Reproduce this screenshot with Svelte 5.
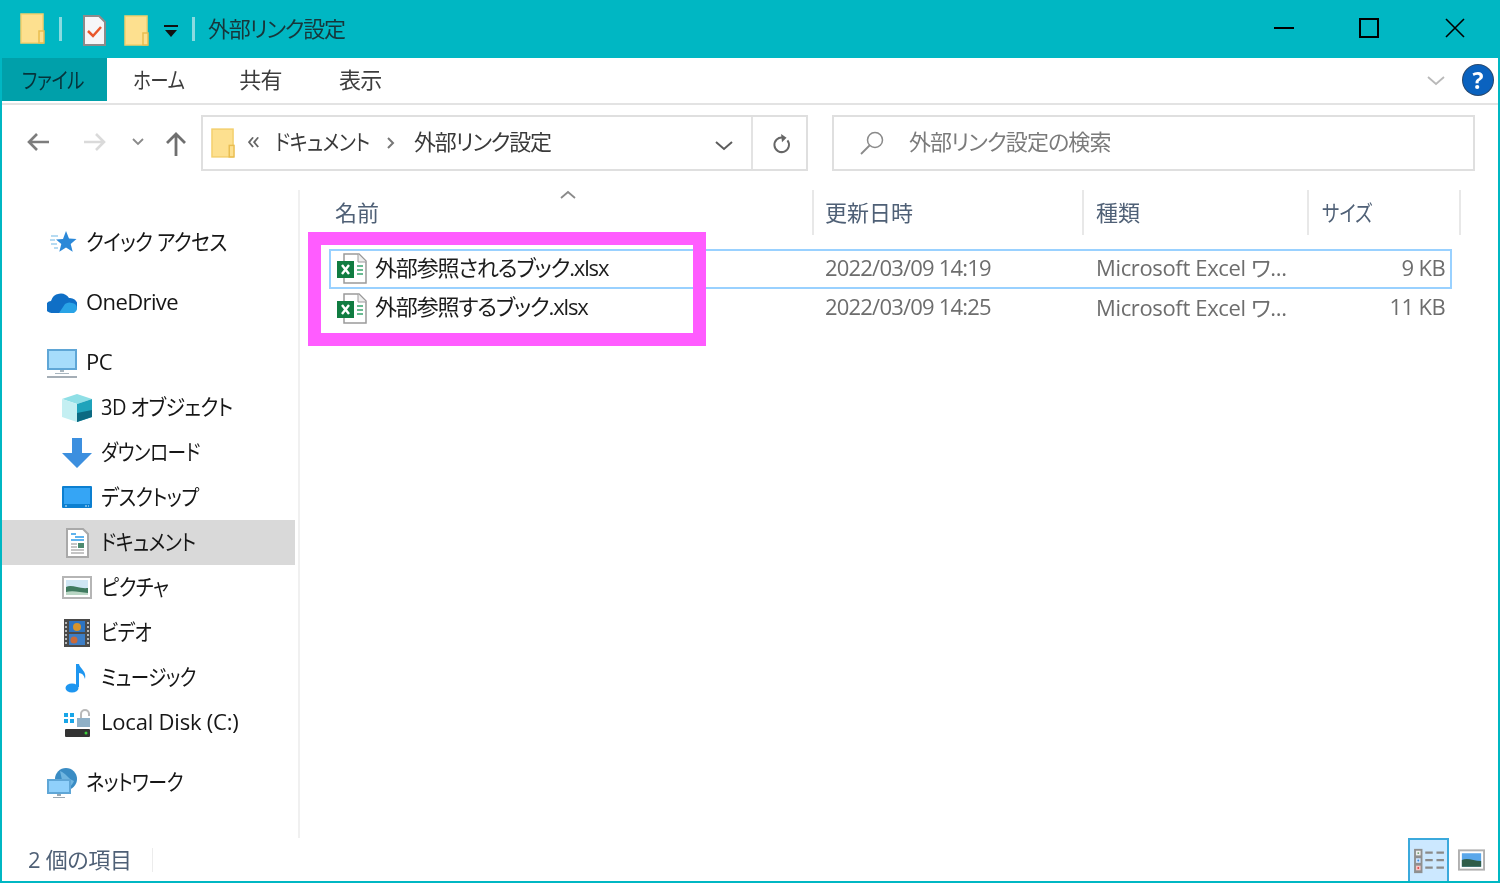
<script>
  const nav = [
    { groups: [{ icon: 'star', label: 'クイック アクセス', level: 0, sx: 0.9 }] },
    { groups: [{ icon: 'cloud', label: 'OneDrive', level: 0, latin: true, ls: -0.6 }] },
    { groups: [
      { icon: 'pc', label: 'PC', level: 0, latin: true, ls: -0.6 },
      { icon: 'cube', label: '3D オブジェクト', level: 1, sx: 0.91 },
      { icon: 'down', label: 'ダウンロード', level: 1, sx: 0.85 },
      { icon: 'desk', label: 'デスクトップ', level: 1, sx: 0.88 },
      { icon: 'doc', label: 'ドキュメント', level: 1, selected: true, sx: 0.87 },
      { icon: 'pic', label: 'ピクチャ', level: 1, sx: 0.89 },
      { icon: 'film', label: 'ビデオ', level: 1, sx: 0.85 },
      { icon: 'music', label: 'ミュージック', level: 1, sx: 0.84 },
      { icon: 'disk', label: 'Local Disk (C:)', level: 1, latin: true, ls: -0.2 }
    ] },
    { groups: [{ icon: 'net', label: 'ネットワーク', level: 0, sx: 0.86 }] }
  ];
  const files = [
    { name: '外部参照されるブック.xlsx', date: '2022/03/09 14:19', type: 'Microsoft Excel ワ...', size: '9 KB', focus: true },
    { name: '外部参照するブック.xlsx', date: '2022/03/09 14:25', type: 'Microsoft Excel ワ...', size: '11 KB', focus: false }
  ];
</script>

{#snippet folder(cls)}
  <svg class={cls} viewBox="0 0 25 31" aria-hidden="true">
    <rect x="1" y="1" width="22" height="29" fill="#fde08f" stroke="#f3cf6c" stroke-width="1.5"/>
    <rect x="19" y="18" width="5" height="12" fill="#fde08f" stroke="#e9bd50" stroke-width="1.5"/>
  </svg>
{/snippet}

{#snippet navIcon(name)}
  <svg class="nico" viewBox="0 0 30 30" aria-hidden="true">
    {#if name === 'star'}
      <path d="M19 3l3 7.500 7.500.5-5.800 5 2 7.800L19 19.500l-6.700 4.300 2-7.800-5.300-4.500 7-.5z" fill="#2b88d8"/>
      <path d="M4 8h7M3 12h5M4 16h6M7 20h4" stroke="#9fd0ee" stroke-width="1.500"/>
    {:else if name === 'cloud'}
      <path d="M6 26a6 6 0 0 1-1-12 10 10 0 0 1 18-3 7 7 0 0 1 2 15z" fill="#0f6fc6" transform="translate(-1 -1)"/>
      <path d="M12 25l6-9a7 7 0 0 1 7-1 5.500 5.500 0 0 1 5 5 5 5 0 0 1-3 5z" fill="#29a3e6"/>
    {:else if name === 'pc'}
      <rect x="0" y="1" width="30" height="21" fill="#5fa6d6"/>
      <rect x="2" y="3" width="26" height="17" fill="#a6dcfb"/>
      <path d="M13 22h4v2h-4zM8 25h14v1H8z" fill="#a9b6bf"/>
      <rect x="0" y="28" width="30" height="2" fill="#a5aeb6"/>
    {:else if name === 'cube'}
      <path d="M15 1l15 5-15 5L0 6z" fill="#8fdfe6"/>
      <path d="M0 6l15 5v18L0 24z" fill="#c4eff2"/>
      <path d="M30 6l-15 5v18l15-5z" fill="#1fa3bb"/>
      <path d="M15 20l15-3v7l-15 5z" fill="#0c6a82"/>
    {:else if name === 'down'}
      <path d="M10 0h10v15h10L15 30 0 15h10z" fill="#3c8fdf"/>
    {:else if name === 'desk'}
      <rect y="3" width="30" height="22" rx="1" fill="#0c7fd0"/>
      <rect x="2" y="5" width="26" height="16" fill="#35a5f5"/>
      <path d="M3 23h2M23 23h2M26 23h1" stroke="#d7eefc" stroke-width="1"/>
    {:else if name === 'doc'}
      <path d="M5 1h16l5 5v23H5z" fill="#fff" stroke="#a9a9a9" stroke-width="2"/>
      <path d="M9 6h5M13 9h9M9 12h13" stroke="#2b9be8" stroke-width="1.500"/>
      <path d="M9 16h6M9 19h6M9 22h13M9 25h13" stroke="#8b8b8b" stroke-width="1.200"/>
      <rect x="16" y="15" width="6" height="5" fill="#4d8a6f"/>
    {:else if name === 'pic'}
      <rect x="1" y="4" width="28" height="21" fill="#fff" stroke="#b5b5b5" stroke-width="2"/>
      <rect x="4" y="7" width="22" height="15" fill="#cfe6f4"/>
      <path d="M4 14c6-3 12 2 22 1v7H4z" fill="#3f7a5f"/>
      <path d="M4 19c6-2 14 0 22 1v2H4z" fill="#b9d6c4"/>
    {:else if name === 'film'}
      <rect x="2" y="1" width="26" height="28" fill="#4a4a4a"/>
      <rect x="7" y="3" width="16" height="11" fill="#2d74c2"/>
      <rect x="7" y="16" width="16" height="11" fill="#3d7ec6"/>
      <circle cx="15" cy="9" r="4" fill="#d7942a"/>
      <circle cx="12" cy="22" r="3.500" fill="#c96a3a"/>
      <path d="M4 4v23M26 4v23" stroke="#ddd" stroke-width="1.500" stroke-dasharray="2 2"/>
    {:else if name === 'music'}
      <ellipse cx="10" cy="25" rx="6.500" ry="4.500" fill="#1e96f0"/>
      <path d="M14 24V1h3c1 5 8 7 6 15-1-4-3-6-6-6v14z" fill="#1e96f0"/>
    {:else if name === 'disk'}
      <rect x="2" y="5" width="4" height="4" fill="#19a6e8"/><rect x="8" y="5" width="4" height="4" fill="#19a6e8"/>
      <rect x="2" y="11" width="4" height="4" fill="#19a6e8"/><rect x="8" y="11" width="4" height="4" fill="#19a6e8"/>
      <path d="M19 10V6a4 4 0 0 1 8 0v2" fill="none" stroke="#b9b9b9" stroke-width="2"/>
      <rect x="15" y="10" width="13" height="9" fill="#8fb0c7"/>
      <rect x="3" y="21" width="25" height="8" rx="1" fill="#333"/>
      <circle cx="24" cy="25" r="1.500" fill="#3bd23b"/>
    {:else if name === 'net'}
      <circle cx="19" cy="11" r="11" fill="#3a8cc4"/>
      <path d="M13 3c6 2 8 8 14 10-2 5-6 8-10 8z" fill="#6fb5e0"/>
      <rect x="0" y="11" width="24" height="15" fill="#5fa6d6"/>
      <rect x="2" y="13" width="20" height="11" fill="#8fd0fb"/>
      <path d="M10 26h4v2h-4zM6 29h12v1H6z" fill="#9aa8b2"/>
    {/if}
  </svg>
{/snippet}

{#snippet excel()}
  <svg class="xl" viewBox="0 0 30 31" aria-hidden="true">
    <path d="M7 1h15l7 7v22H7z" fill="#fff" stroke="#9b9b9b" stroke-width="1.500"/>
    <path d="M21 1v8h8" fill="#eee" stroke="#9b9b9b" stroke-width="1"/>
    <path d="M20 13h6M20 17h6M20 21h6" stroke="#3aa56f" stroke-width="1.500"/>
    <rect x="0" y="8" width="17" height="17" fill="#107c41"/>
    <path d="M5 12l7 9M12 12l-7 9" stroke="#fff" stroke-width="2.400"/>
  </svg>
{/snippet}

<div class="window">
  <header class="title">
    {@render folder('qa first')}
    <span class="tsep"></span>
    <svg class="qa check" viewBox="0 0 23 31" aria-hidden="true">
      <path d="M1 1h15l6 6v23H1z" fill="#f6f6f8" stroke="#8e8a8a" stroke-width="2"/>
      <path d="M5 16l5 5 8-9" fill="none" stroke="#e9572b" stroke-width="2.500"/>
    </svg>
    {@render folder('qa second')}
    <svg class="drop" viewBox="0 0 14 13" aria-hidden="true">
      <rect y="0" width="14" height="2" fill="#111"/>
      <path d="M1 5h12l-6 7z" fill="#111"/>
    </svg>
    <span class="tsep last"></span>
    <span class="wintitle">外部リンク設定</span>
    <div class="controls">
      <svg class="ctl min" viewBox="0 0 20 20" aria-hidden="true"><path d="M0 10h20" stroke="#000" stroke-width="2"/></svg>
      <svg class="ctl max" viewBox="0 0 20 20" aria-hidden="true"><rect x="1" y="1" width="18" height="18" fill="none" stroke="#000" stroke-width="2"/></svg>
      <svg class="ctl close" viewBox="0 0 20 20" aria-hidden="true"><path d="M1 1l18 18M19 1L1 19" stroke="#000" stroke-width="1.600"/></svg>
    </div>
  </header>

  <div class="ribbon">
    <div class="tab file"><span class="narrow">ファイル</span></div>
    <div class="tab home"><span class="narrow">ホーム</span></div>
    <div class="tab share"><span>共有</span></div>
    <div class="tab view"><span>表示</span></div>
    <svg class="rchev" viewBox="0 0 18 10" aria-hidden="true"><path d="M1 1l8 7 8-7" fill="none" stroke="#b9b9b9" stroke-width="1.800"/></svg>
    <div class="help">?</div>
  </div>

  <div class="addrrow">
    <svg class="arrow back" viewBox="0 0 24 20" aria-hidden="true"><path d="M23 10H3M11 2l-8 8 8 8" fill="none" stroke="#7d7d7d" stroke-width="2.600"/></svg>
    <svg class="arrow fwd" viewBox="0 0 24 20" aria-hidden="true"><path d="M1 10h20M13 2l8 8-8 8" fill="none" stroke="#dadada" stroke-width="2.600"/></svg>
    <svg class="hist" viewBox="0 0 12 8" aria-hidden="true"><path d="M1 1l5 5 5-5" fill="none" stroke="#8a8a8a" stroke-width="1.800"/></svg>
    <svg class="up" viewBox="0 0 22 24" aria-hidden="true"><path d="M11 24V3M2 11l9-9 9 9" fill="none" stroke="#6f6f6f" stroke-width="2.800"/></svg>
    <div class="addr">
      {@render folder('afolder')}
      <span class="quote">«</span>
      <span class="crumb one"><span class="narrow">ドキュメント</span></span>
      <svg class="csep" viewBox="0 0 8 12" aria-hidden="true"><path d="M1 1l5 5-5 5" fill="none" stroke="#777" stroke-width="2"/></svg>
      <span class="crumb two">外部リンク設定</span>
      <svg class="achev" viewBox="0 0 18 10" aria-hidden="true"><path d="M1 1l8 7 8-7" fill="none" stroke="#5c5c5c" stroke-width="2"/></svg>
      <span class="adiv"></span>
      <svg class="refresh" viewBox="0 0 22 22" aria-hidden="true">
        <path d="M17 7a8 8 0 1 1-5-3" fill="none" stroke="#666" stroke-width="2.200"/>
        <path d="M10 0l6 4-5 5z" fill="#666"/>
      </svg>
    </div>
    <div class="search">
      <svg class="lens" viewBox="0 0 24 24" aria-hidden="true">
        <circle cx="15" cy="9" r="7.500" fill="none" stroke="#8a8a8a" stroke-width="1.500"/>
        <path d="M9.500 14.500L1 23" stroke="#8a8a8a" stroke-width="1.800"/>
      </svg>
      <span>外部リンク設定の検索</span>
    </div>
  </div>

  <div class="main">
    <nav class="side">
      {#each nav as group}
        <div class="group">
          {#each group.groups as item}
            <div class="item" class:sub={item.level === 1} class:sel={item.selected}>
              {@render navIcon(item.icon)}
              {#if item.latin}
                <span class="latin" style:letter-spacing="{item.ls}px">{item.label}</span>
              {:else}
                <span class="kana" style:transform="scaleX({item.sx})">{item.label}</span>
              {/if}
            </div>
          {/each}
        </div>
      {/each}
    </nav>
    <section class="content">
      <div class="heads">
        <div class="head"><span>名前</span><svg class="sort" viewBox="0 0 16 9" aria-hidden="true"><path d="M1 8l7-6 7 6" fill="none" stroke="#8a8a8a" stroke-width="1.800"/></svg></div>
        <div class="head"><span>更新日時</span></div>
        <div class="head"><span>種類</span></div>
        <div class="head"><span class="narrow">サイズ</span></div>
      </div>
      {#each files as f}
        <div class="row" class:focus={f.focus}>
          <div class="namecell">{@render excel()}<span>{f.name}</span></div>
          <div class="cell">{f.date}</div>
          <div class="cell">{f.type}</div>
          <div class="cell size">{f.size}</div>
        </div>
      {/each}
      <div class="mark"></div>
    </section>
  </div>

  <footer class="status">
    <span class="count">2 個の項目</span>
    <span class="sdiv"></span>
    <div class="viewbtns">
      <div class="vbtn on">
        <svg viewBox="0 0 34 30" aria-hidden="true">
          <rect x="1" y="2" width="9" height="26" fill="#8f8f8f"/>
          <rect x="3" y="4" width="5" height="5" fill="#eee"/><rect x="3" y="12" width="5" height="5" fill="#cfe4ff"/><rect x="3" y="20" width="5" height="5" fill="#f7c6c6"/>
          <circle cx="5.500" cy="6.500" r="1" fill="#6a9a6a"/><circle cx="5.500" cy="14.500" r="1" fill="#3a8de0"/><circle cx="5.500" cy="22.500" r="1" fill="#e04040"/>
          <path d="M13 6h8M25 6h8M13 14h8M25 14h8M13 22h8M25 22h8" stroke="#8a8a8a" stroke-width="2.400"/>
        </svg>
      </div>
      <div class="vbtn">
        <svg viewBox="0 0 28 22" aria-hidden="true">
          <rect x="1" y="1" width="26" height="20" fill="#fff" stroke="#b0b0b0" stroke-width="2"/>
          <rect x="4" y="4" width="20" height="14" fill="#5aa7ea"/>
          <path d="M4 11c6-3 12 1 20 1v6H4z" fill="#2f5d49"/>
        </svg>
      </div>
    </div>
  </footer>
</div>

<style>
  :global(body) { margin: 0; background: #fff; }
  .window {
    position: relative;
    box-sizing: border-box;
    width: 1500px;
    height: 883px;
    display: flex;
    flex-direction: column;
    border: 2px solid #00b7c3;
    border-top: 0;
    background: #fff;
    overflow: hidden;
    font-family: "Open Sans", "Noto Sans CJK JP", sans-serif;
    font-size: 22px;
    font-feature-settings: "palt";
    letter-spacing: -0.6px;
    color: #161616;
    filter: blur(0.5px);
  }
  .narrow { display: inline-block; transform: scaleX(0.84); transform-origin: left center; white-space: nowrap; }

  .title {
    flex: 0 0 58px;
    display: flex;
    align-items: center;
    background: #00b7c3;
    margin: 0 -2px;
    padding-left: 20px;
  }
  .qa { flex: none; width: 25px; height: 31px; }
  .first { margin-top: -2px; }
  .tsep { flex: none; width: 3px; height: 24px; margin: -1px 21px 0 14px; background: #8adbe0; }
  .check { width: 23px; margin-left: 0; margin-top: 2px; }
  .second { margin-left: 18px; margin-top: 2px; }
  .drop { flex: none; width: 14px; height: 13px; margin: 5px 0 0 15px; }
  .tsep.last { margin: -1px 13px 0 14px; }
  .wintitle { color: #17363a; padding-bottom: 4px; letter-spacing: -1.2px; }
  .controls { margin-left: auto; display: flex; align-items: center; padding-right: 35px; margin-top: -2px; }
  .ctl { display: block; width: 20px; height: 20px; }
  .min { margin-right: 65px; }
  .max { margin-right: 66px; }

  .ribbon {
    flex: 0 0 47px;
    box-sizing: border-box;
    display: flex;
    align-items: flex-start;
    border-bottom: 2px solid #e3e3e3;
    color: #3c3c3c;
  }
  .tab { height: 43px; display: flex; align-items: center; flex: none; }
  .tab span { padding-bottom: 3px; }
  .file { width: 105px; background: #00a0aa; color: #06333a; padding-left: 20px; box-sizing: border-box; }
  .home { margin-left: 26px; }
  .share { margin-left: 45px; }
  .view { margin-left: 57px; }
  .rchev { width: 18px; height: 10px; margin: 18px 0 0 auto; flex: none; }
  .help {
    flex: none;
    width: 30px;
    height: 30px;
    margin: 7px 5px 0 18px;
    border-radius: 50%;
    background: #0a62bf;
    color: #fff;
    font: 700 23px/30px "Open Sans", sans-serif;
    letter-spacing: 0;
    text-align: center;
    box-shadow: 0 0 0 1px #28486e;
  }

  .addrrow { flex: 0 0 85px; display: flex; align-items: flex-start; }
  .arrow { flex: none; width: 24px; height: 20px; margin-top: 27px; }
  .back { margin-left: 24px; }
  .fwd { margin-left: 33px; }
  .hist { flex: none; width: 12px; height: 8px; margin: 33px 0 0 25px; }
  .up { flex: none; width: 22px; height: 24px; margin: 27px 0 0 21px; }
  .addr {
    flex: none;
    box-sizing: border-box;
    width: 607px;
    height: 56px;
    margin: 10px 0 0 14px;
    border: 2px solid #dfdfdf;
    display: flex;
    align-items: center;
    padding-left: 8px;
    color: #3a3a3a;
  }
  .afolder { flex: none; width: 24px; height: 30px; }
  .quote { flex: none; width: 16px; margin-left: 12px; color: #666; font-size: 26px; line-height: 30px; padding-bottom: 8px; }
  .crumb { white-space: nowrap; padding-bottom: 7px; }
  .crumb.one { flex: none; width: 94px; margin-left: 12px; }
  .crumb.one .narrow { transform: scaleX(0.87); }
  .crumb.two { letter-spacing: -1.2px; }
  .csep { flex: none; width: 8px; height: 12px; margin: 0 19px 0 18px; }
  .achev { flex: none; width: 18px; height: 10px; margin: 5px 0 0 auto; }
  .adiv { flex: none; width: 2px; height: 52px; background: #e3e3e3; margin-left: 18px; }
  .refresh { flex: none; width: 20px; height: 22px; margin: 2px 14px 0 19px; }
  .search {
    flex: none;
    box-sizing: border-box;
    width: 643px;
    height: 56px;
    margin: 10px 0 0 24px;
    border: 2px solid #dfdfdf;
    display: flex;
    align-items: center;
    padding-left: 26px;
    color: #7b7b7b;
    gap: 25px;
  }
  .search span { padding-bottom: 7px; letter-spacing: -0.9px; }
  .lens { flex: none; width: 24px; height: 24px; }

  .main { flex: 1; min-height: 0; display: flex; }
  .side {
    flex: 0 0 298px;
    box-sizing: border-box;
    border-right: 2px solid #f0f0f0;
    padding-top: 30px;
    display: flex;
    flex-direction: column;
    gap: 15px;
  }
  .item {
    height: 45px;
    width: 293px;
    display: flex;
    align-items: center;
    gap: 10px;
    padding-left: 45px;
    box-sizing: border-box;
    white-space: nowrap;
  }
  .item.sub { padding-left: 60px; }
  .item.sel { background: #d9d9d9; }
  .nico { flex: none; width: 30px; height: 30px; }
  .kana { display: inline-block; transform-origin: left center; padding-bottom: 6px; margin-left: -1px; }
  .latin { padding-bottom: 4px; margin-left: -1px; }

  .content { flex: 1; min-width: 0; padding-left: 29px; position: relative; }
  .heads { display: flex; height: 45px; margin-bottom: 14px; }
  .head {
    flex: none;
    box-sizing: border-box;
    border-right: 2px solid #e8e8e8;
    padding: 5px 0 0 11px;
    color: #4f6076;
    position: relative;
    height: 45px;
    letter-spacing: 0;
  }
  .head:nth-child(1) { width: 485px; padding-left: 6px; }
  .head:nth-child(2) { width: 270px; }
  .head:nth-child(3) { width: 225px; padding-left: 12px; }
  .head:nth-child(4) { width: 152px; padding-left: 13px; }
  .sort { position: absolute; left: 231px; top: 0; width: 16px; height: 9px; }

  .row {
    box-sizing: border-box;
    width: 1123px;
    height: 39.5px;
    display: flex;
    align-items: center;
    border: 2px solid transparent;
    color: #6d6d6d;
    white-space: nowrap;
  }
  .row.focus { border-color: #99d1ff; }
  .namecell { flex: 0 0 482px; display: flex; align-items: center; gap: 8px; padding-left: 6px; box-sizing: border-box; color: #1c1c1c; }
  .namecell span { padding-bottom: 6px; letter-spacing: -1.15px; }
  .xl { flex: none; width: 30px; height: 31px; }
  .cell { flex: none; width: 271px; padding: 0 0 4px 12px; box-sizing: border-box; letter-spacing: -0.8px; }
  .cell + .cell { width: 225px; letter-spacing: -0.35px; padding-bottom: 5px; }
  .cell.size { flex: 1; width: auto; text-align: right; padding: 0 5px 4px 0; letter-spacing: -0.6px; }

  .mark {
    position: absolute;
    left: 8px;
    top: 42px;
    width: 398px;
    height: 114px;
    box-sizing: border-box;
    border: 13px solid #ff5cff;
  }

  .status {
    flex: 0 0 43px;
    display: flex;
    align-items: center;
    color: #4f6076;
    padding-left: 26px;
  }
  .count { padding-bottom: 4px; letter-spacing: -0.3px; }
  .sdiv { width: 1px; height: 24px; background: #ececec; margin-left: 20px; }
  .viewbtns { margin-left: auto; display: flex; align-items: stretch; height: 43px; padding-right: 9px; gap: 4px; }
  .vbtn { width: 36px; display: flex; align-items: center; justify-content: center; }
  .vbtn.on { width: 41px; box-sizing: border-box; background: #cce8ff; border: 2px solid #3ba9dc; border-bottom: 0; }
  .vbtn.on svg { width: 32px; height: 28px; }
  .vbtn:not(.on) svg { width: 27px; height: 22px; }
</style>
